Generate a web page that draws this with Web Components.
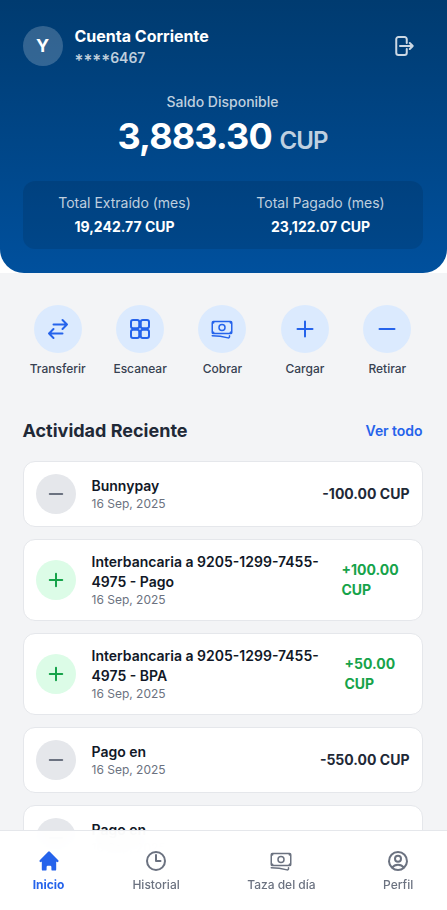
<!DOCTYPE html>
<html lang="es">
<head>
<meta charset="utf-8">
<meta name="viewport" content="width=device-width, initial-scale=1">
<title>Cuenta Corriente</title>
<style>
html,body{margin:0;height:100%;overflow:hidden}
body{background:#fff;font-family:Inter,"Liberation Sans",sans-serif;font-size:14px;line-height:20px;color:#1f2937}
</style>
</head>
<body>
<bank-app></bank-app>
<script>
const ICONS = {
  logout: '<path d="M15.75 9V5.25A2.25 2.25 0 0 0 13.5 3h-6a2.25 2.25 0 0 0-2.25 2.25v13.5A2.25 2.25 0 0 0 7.5 21h6a2.25 2.25 0 0 0 2.25-2.25V15m3 0 3-3m0 0-3-3m3 3H9"/>',
  transfer: '<path d="M7.5 21 3 16.5m0 0L7.5 12M3 16.5h13.5m0-13.5L21 7.5m0 0L16.5 12M21 7.5H7.5"/>',
  grid: '<rect x="3" y="3" width="8.25" height="8.25" rx="2"/><rect x="12.75" y="3" width="8.25" height="8.25" rx="2"/><rect x="3" y="12.75" width="8.25" height="8.25" rx="2"/><rect x="12.75" y="12.75" width="8.25" height="8.25" rx="2"/>',
  cash: '<path stroke-width="1.5" d="M2.25 18.75a60.07 60.07 0 0 1 15.797 2.101c.727.198 1.453-.342 1.453-1.096V18.75M3.75 4.5v.75A.75.75 0 0 1 3 6h-.75m0 0v-.375c0-.621.504-1.125 1.125-1.125H20.25M2.25 6v9m18-10.5v.75c0 .414.336.75.75.75h.75m-1.5-1.5h.375c.621 0 1.125.504 1.125 1.125v9.75c0 .621-.504 1.125-1.125 1.125h-.375m1.5-1.5H21a.75.75 0 0 0-.75.75v.75m0 0H3.75m0 0h-.375a1.125 1.125 0 0 1-1.125-1.125V15m1.5 1.5v-.75A.75.75 0 0 0 3 15h-.75M15 10.5a3 3 0 1 1-6 0 3 3 0 0 1 6 0Z"/>',
  plus: '<path d="M12 4.5v15m7.5-7.5h-15"/>',
  minus: '<path d="M19.5 12h-15"/>',
  clock: '<path d="M12 6v6h4.5m4.5 0a9 9 0 1 1-18 0 9 9 0 0 1 18 0Z"/>',
  user: '<path d="M17.982 18.725A7.488 7.488 0 0 0 12 15.75a7.488 7.488 0 0 0-5.982 2.975m11.963 0a9 9 0 1 0-11.963 0m11.963 0A8.966 8.966 0 0 1 12 21a8.966 8.966 0 0 1-5.982-2.275M15 9.75a3 3 0 1 1-6 0 3 3 0 0 1 6 0Z"/>',
  home: '<path transform="scale(1.2)" fill="currentColor" stroke="none" d="M10.707 2.293a1 1 0 00-1.414 0l-7 7a1 1 0 001.414 1.414L4 10.414V17a1 1 0 001 1h2a1 1 0 001-1v-2a1 1 0 011-1h2a1 1 0 011 1v2a1 1 0 001 1h2a1 1 0 001-1v-6.586l.293.293a1 1 0 001.414-1.414l-7-7z"/>'
};
const define = (name, html) => customElements.define(name, class extends HTMLElement {
  constructor() {
    super();
    this.attachShadow({ mode: 'open' }).innerHTML = typeof html === 'function' ? '' : html;
  }
  connectedCallback() {
    if (typeof html === 'function') this.shadowRoot.innerHTML = html(this);
  }
});

define('ui-icon', el => `<style>
:host{display:block;width:24px;height:24px;flex:none}
svg{display:block;width:100%;height:100%}
</style><svg viewBox="0 0 24 24" fill="none" stroke="currentColor" stroke-width="${el.getAttribute('weight') || 2}" stroke-linecap="round" stroke-linejoin="round">${ICONS[el.getAttribute('name')]}</svg>`);

define('balance-stat', `<style>
:host{display:block;text-align:center;color:#fff}
.label{color:rgba(255,255,255,.75)}
.value{margin-top:4px;font-weight:700}
</style><div class="label"><slot></slot></div><div class="value"><slot name="value"></slot></div>`);

define('account-header', `<style>
:host{display:block;box-sizing:border-box;height:273px;padding:24px 24.5px 24px 22.5px;border-radius:0 0 24px 24px;background:linear-gradient(180deg,#003b70,#00509d);color:#fff}
.top{display:flex;justify-content:space-between;align-items:center;height:44px}
.who{display:flex;align-items:center;gap:12px}
.avatar{width:40px;height:40px;border-radius:50%;background:rgba(255,255,255,.2);display:flex;align-items:center;justify-content:center;font-weight:700;font-size:18px}
.name{font-size:16px;line-height:24px;font-weight:700}
.num{font-weight:600;color:rgba(255,255,255,.75)}
.mask{font-size:16.5px;line-height:0;vertical-align:-3px}
ui-icon{padding:8px;color:rgba(255,255,255,.8)}
.mid{margin-top:24px;text-align:center}
.mid .cap{font-weight:500;color:rgba(255,255,255,.75)}
.amount{margin-top:4px;height:41px;font-size:36px;line-height:40px;font-weight:700;letter-spacing:-.9px}
.amount span{font-size:24px;font-weight:600;color:rgba(255,255,255,.75)}
.stats{margin-top:24px;box-sizing:border-box;height:68px;padding:12px;border-radius:12px;background:rgba(0,0,0,.1);display:grid;grid-template-columns:1fr 1fr;gap:16px}
</style>
<div class="top"><div class="who"><div class="avatar">Y</div><div><div class="name">Cuenta Corriente</div><div class="num"><span class="mask">****</span>6467</div></div></div><ui-icon name="logout"></ui-icon></div>
<div class="mid"><div class="cap">Saldo Disponible</div><div class="amount">3,883.30 <span>CUP</span></div></div>
<div class="stats"><balance-stat>Total Extraído (mes)<span slot="value">19,242.77 CUP</span></balance-stat><balance-stat>Total Pagado (mes)<span slot="value">23,122.07 CUP</span></balance-stat></div>`);

define('quick-action', el => `<style>
:host{display:flex;flex-direction:column;align-items:center;gap:8px;font-size:12px;line-height:16px;font-weight:500;color:#374151}
.c{width:48px;height:48px;border-radius:50%;background:#dbeafe;color:#2563eb;display:flex;align-items:center;justify-content:center}
</style><div class="c"><ui-icon name="${el.getAttribute('icon')}"></ui-icon></div><slot></slot>`);

define('movement-card', el => {
  const inc = el.hasAttribute('income');
  return `<style>
:host{display:flex;align-items:center;justify-content:space-between;box-sizing:border-box;padding:12px;border:1px solid #e5e7eb;border-radius:12px;background:#fff}
.l{display:flex;align-items:center;gap:16px}
.c{flex:none;width:40px;height:40px;border-radius:50%;display:flex;align-items:center;justify-content:center;background:${inc ? '#dcfce7' : '#e5e7eb'};color:${inc ? '#16a34a' : '#6b7280'}}
ui-icon{width:20px;height:20px}
.t{font-weight:600;color:#111827;width:${inc ? '232px' : 'auto'}}
.d{font-size:12px;line-height:16px;color:#6b7280}
.a{font-weight:700;color:${inc ? '#16a34a' : '#1f2937'};width:${el.getAttribute('aw') || 'auto'}}
</style><div class="l"><div class="c"><ui-icon weight="2.4" name="${inc ? 'plus' : 'minus'}"></ui-icon></div><div><div class="t"><slot></slot></div><div class="d">16 Sep, 2025</div></div></div><div class="a"><slot name="amount"></slot></div>`;
});

define('nav-item', el => `<style>
:host{display:flex;flex-direction:column;align-items:center;gap:4px;font-size:12px;line-height:16px;font-weight:500;color:#6b7280}
:host([active]){color:#2563eb;font-weight:700;margin:0 .5px 0 -1px}
</style><ui-icon name="${el.getAttribute('icon')}"></ui-icon><slot></slot>`);

define('bottom-nav', `<style>
:host{position:fixed;left:0;right:0;bottom:0;height:80px;box-sizing:border-box;border-top:1px solid #e5e7eb;background:rgba(255,255,255,.95);backdrop-filter:blur(12px);display:flex;justify-content:space-around;align-items:flex-start;padding-top:18px}
</style><slot></slot>`);

define('bank-app', `<style>
:host{display:block;height:910px;overflow:hidden}
main{background:#f3f4f6;padding:32px 24.5px 100px 22.5px}
.actions{display:grid;grid-template-columns:repeat(5,1fr);gap:12px}
.head{display:flex;justify-content:space-between;align-items:center;margin:40px 0 16px}
h2{margin:0;font-size:18px;line-height:28px;font-weight:700}
a{color:#2563eb;font-weight:600;letter-spacing:-.05px}
.list{display:grid;gap:12px}
</style>
<account-header></account-header>
<main>
<div class="actions">
<quick-action icon="transfer">Transferir</quick-action><quick-action icon="grid">Escanear</quick-action><quick-action icon="cash">Cobrar</quick-action><quick-action icon="plus">Cargar</quick-action><quick-action icon="minus">Retirar</quick-action>
</div>
<div class="head"><h2>Actividad Reciente</h2><a>Ver todo</a></div>
<div class="list">
<movement-card>Bunnypay<span slot="amount">-100.00 CUP</span></movement-card>
<movement-card income aw="68px">Interbancaria a 9205-1299-7455-4975 - Pago<span slot="amount">+100.00 CUP</span></movement-card>
<movement-card income aw="65px">Interbancaria a 9205-1299-7455-4975 - BPA<span slot="amount">+50.00 CUP</span></movement-card>
<movement-card>Pago en<span slot="amount">-550.00 CUP</span></movement-card>
<movement-card>Pago en</movement-card>
</div>
</main>
<bottom-nav><nav-item icon="home" active>Inicio</nav-item><nav-item icon="clock">Historial</nav-item><nav-item icon="cash">Taza del día</nav-item><nav-item icon="user">Perfil</nav-item></bottom-nav>`);
</script>
</body>
</html>
